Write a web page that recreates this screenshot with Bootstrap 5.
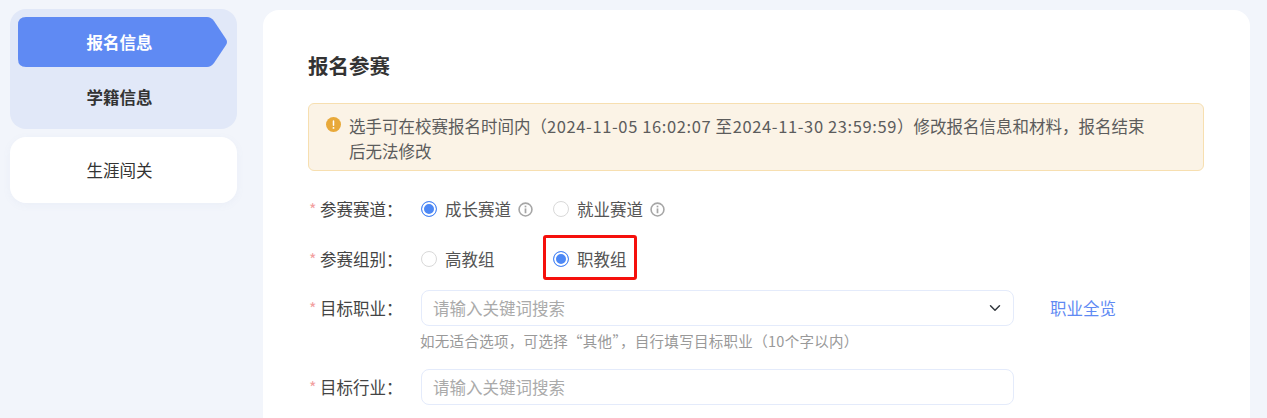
<!DOCTYPE html>
<html lang="zh-CN">
<head>
  <meta charset="UTF-8">
  <meta name="viewport" content="width=device-width, initial-scale=1.0">
  <title>报名参赛</title>
  <link href="https://cdn.jsdelivr.net/npm/bootstrap@5.3.0/dist/css/bootstrap.min.css" rel="stylesheet">
  <style>
    html, body { height: 418px; overflow: hidden; }
    body { background: #f2f5fb; color: #333; font-family: "Noto Sans CJK SC", "Liberation Sans", sans-serif; font-size: 16.5px; }
    .page-wrap { padding: 9px 17px 0 10px; gap: 26px; }
    .side-col { width: 227px; flex: none; gap: 8px; }
    .side-group { background: #e1e8f8; border-radius: 16px; padding: 8px 0 0 8px; height: 120px; }
    .side-active { width: 209px; height: 50px; background: #5f8af3; color: #fff; font-weight: 700; padding: 1px 6px 0 0; clip-path: path("M8 0H189Q193 0 196 4L208 22Q210 25 208 28L196 46Q193 50 189 50H8Q0 50 0 42V8Q0 0 8 0Z"); }
    .side-plain { width: 209px; height: 50px; margin-top: 5px; font-weight: 700; padding-right: 6px; }
    .side-card { background: #fff; border-radius: 16px; height: 66px; padding: 1px 8px 0 0; box-shadow: 0 2px 8px rgba(120, 140, 190, .06); }
    .main-panel { width: 987px; flex: none; height: 420px; margin-top: 1px; background: #fff; border-radius: 16px 16px 0 0; padding: 41px 46px 0 45px; }
    .main-title { font-size: 20.5px; font-weight: 700; line-height: 28px; margin: 0 0 24px; }
    .tip-box { background: #fbf3e6; border: 1px solid #f7dfb0; border-radius: 6px; padding: 10px 55px 7px 17px; height: 68px; line-height: 25px; color: #5c5c5c; gap: 8px; margin-bottom: 18px; }
    .tip-icon { width: 15px; height: 15px; margin-top: 3px; flex: none; }
    .tip-time { letter-spacing: .62px; }
    .form-line { height: 40px; }
    .form-line-next { margin-top: 10px; }
    .line-label { width: 113px; flex: none; color: #444; white-space: nowrap; }
    .req { color: #f2a0a0; font-size: 16px; width: 11px; display: inline-block; margin-left: 1px; }
    .form-check { margin: 0; padding: 0; min-height: 0; display: flex; align-items: center; }
    .form-check .form-check-input { float: none; margin: 0 8px 0 0; width: 16px; height: 16px; border-color: #d9d9d9; }
    .form-check .form-check-input:checked { background-color: #4d88f5; border-color: #4d88f5; background-image: none; box-shadow: inset 0 0 0 2px #fff; }
    .form-check-label { color: #555; }
    .choice { width: 132px; }
    .info-icon { width: 15px; height: 15px; margin-left: 7px; }
    .red-box { position: absolute; left: -10px; top: -12px; width: 94px; height: 45px; border: 3px solid #f5100c; border-radius: 3px; pointer-events: none; }
    .field-box { width: 593px; height: 36px; border: 1px solid #e4ebfb; border-radius: 8px; font-size: 16.5px; color: #aaa; padding: 0 11px; box-shadow: none; }
    .field-box::placeholder { color: #aaa; }
    .form-select.field-box { background-size: 16px 12px; background-position: right 10px center; }
    .all-link { color: #5f8af3; text-decoration: none; margin-left: 36px; }
    .help-line { font-size: 14.5px; letter-spacing: .3px; color: #999; margin: 5px 0 0 112px; line-height: 20px; height: 38px; }
    .field-line { height: 36px; }
    .field-top { margin-top: 11px; }
  </style>
</head>
<body>
  <div class="d-flex page-wrap">
    <!-- sidebar -->
    <div class="d-flex flex-column side-col">
      <div class="side-group">
        <div class="side-active d-flex align-items-center justify-content-center">报名信息</div>
        <div class="side-plain d-flex align-items-center justify-content-center">学籍信息</div>
      </div>
      <div class="side-card d-flex align-items-center justify-content-center">生涯闯关</div>
    </div>

    <!-- main form -->
    <div class="main-panel">
      <h1 class="main-title">报名参赛</h1>
      <div class="tip-box d-flex">
        <svg class="tip-icon" viewBox="0 0 16 16"><circle cx="8" cy="8" r="8" fill="#e8a93a"/><rect x="7.2" y="3.5" width="1.6" height="6" rx=".8" fill="#fff"/><circle cx="8" cy="11.6" r="1" fill="#fff"/></svg>
        <div>
          <div class="text-nowrap">选手可在校赛报名时间内（<span class="tip-time">2024-11-05 16:02:07 至2024-11-30 23:59:59</span>）修改报名信息和材料，报名结束</div>
          <div>后无法修改</div>
        </div>
      </div>

      <div class="form-line d-flex align-items-center">
        <div class="line-label"><span class="req">*</span>参赛赛道：</div>
        <div class="form-check choice">
          <input class="form-check-input" type="radio" name="track" id="t1" checked>
          <label class="form-check-label" for="t1">成长赛道</label>
          <svg class="info-icon" viewBox="0 0 14 14"><circle cx="7" cy="7" r="6" fill="none" stroke="#a6a6a6" stroke-width="1.5"/><rect x="6.2" y="6" width="1.6" height="4.5" fill="#a6a6a6"/><rect x="6.2" y="3.4" width="1.6" height="1.6" fill="#a6a6a6"/></svg>
        </div>
        <div class="form-check">
          <input class="form-check-input" type="radio" name="track" id="t2">
          <label class="form-check-label" for="t2">就业赛道</label>
          <svg class="info-icon" viewBox="0 0 14 14"><circle cx="7" cy="7" r="6" fill="none" stroke="#a6a6a6" stroke-width="1.5"/><rect x="6.2" y="6" width="1.6" height="4.5" fill="#a6a6a6"/><rect x="6.2" y="3.4" width="1.6" height="1.6" fill="#a6a6a6"/></svg>
        </div>
      </div>

      <div class="form-line form-line-next d-flex align-items-center">
        <div class="line-label"><span class="req">*</span>参赛组别：</div>
        <div class="form-check choice">
          <input class="form-check-input" type="radio" name="group" id="g1">
          <label class="form-check-label" for="g1">高教组</label>
        </div>
        <div class="form-check position-relative">
          <input class="form-check-input" type="radio" name="group" id="g2" checked>
          <label class="form-check-label" for="g2">职教组</label>
          <div class="red-box"></div>
        </div>
      </div>

      <div class="d-flex align-items-center field-line field-top">
        <div class="line-label"><span class="req">*</span>目标职业：</div>
        <select class="form-select field-box">
          <option>请输入关键词搜索</option>
        </select>
        <a class="all-link" href="#">职业全览</a>
      </div>
      <div class="help-line">如无适合选项，可选择“其他”，自行填写目标职业（10个字以内）</div>

      <div class="d-flex align-items-center field-line">
        <div class="line-label"><span class="req">*</span>目标行业：</div>
        <input class="form-control field-box" type="text" placeholder="请输入关键词搜索">
      </div>
    </div>
  </div>
  <script src="https://cdn.jsdelivr.net/npm/bootstrap@5.3.0/dist/js/bootstrap.bundle.min.js"></script>
</body>
</html>
